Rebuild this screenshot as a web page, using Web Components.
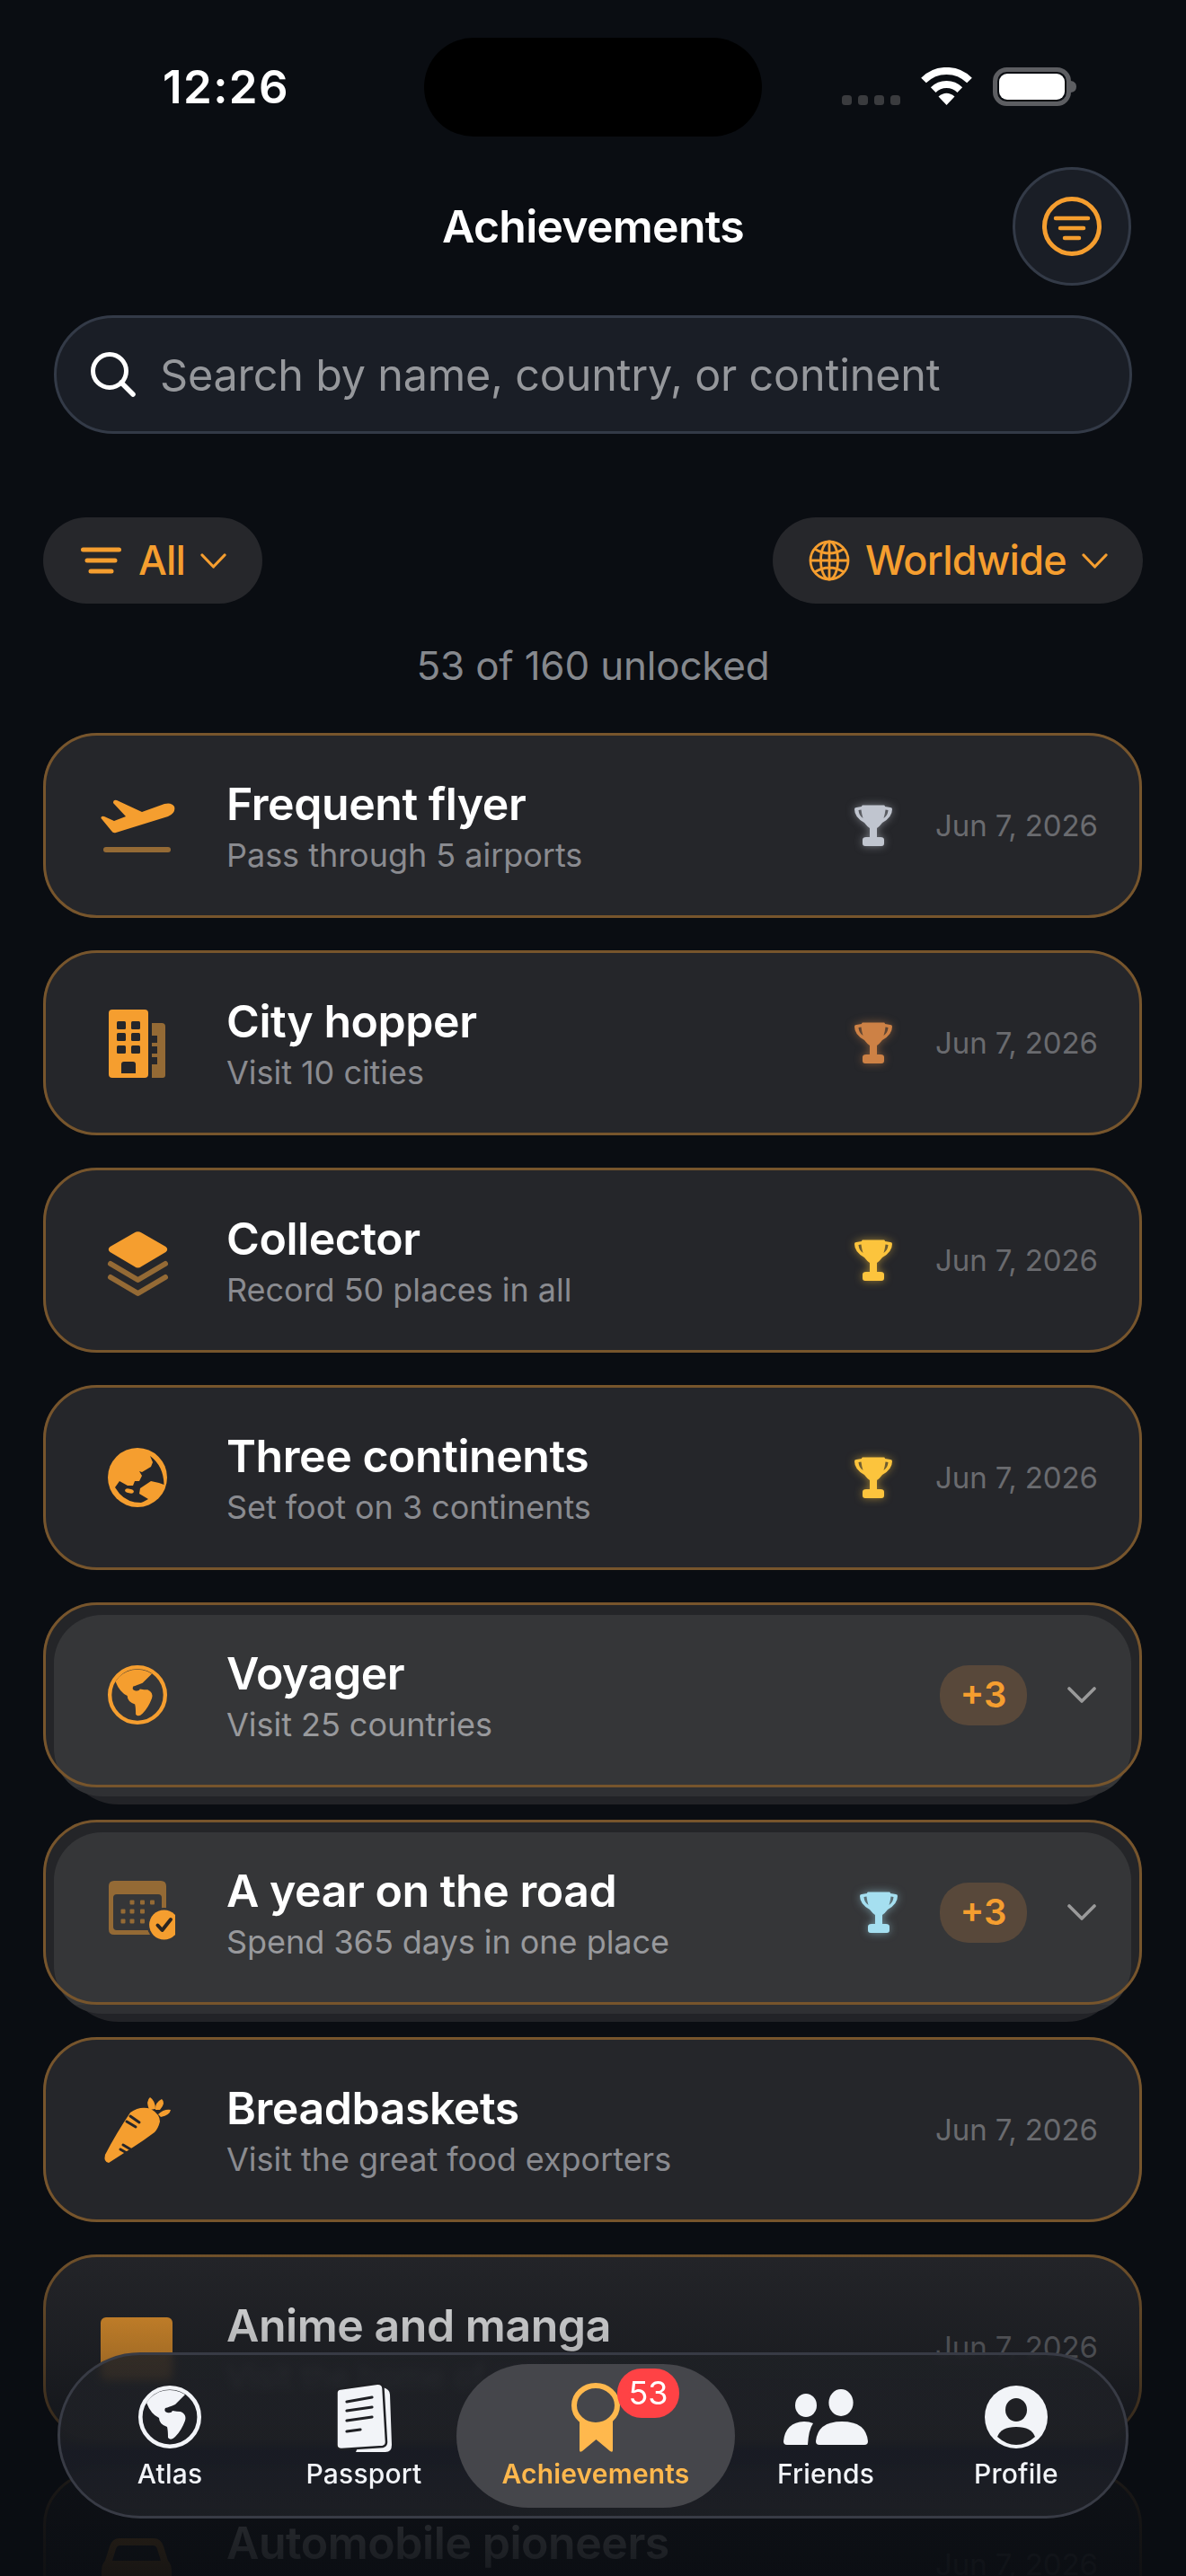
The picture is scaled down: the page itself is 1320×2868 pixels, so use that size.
<!DOCTYPE html>
<html lang="en">
<head>
<meta charset="utf-8">
<title>Achievements</title>
<style>
  html, body { margin: 0; padding: 0; background: #0a0d12; }
  body { width: 1320px; height: 2868px; overflow: hidden; font-family: Inter, "Noto Sans", sans-serif; color: #fff; }
</style>
</head>
<body>
<achievements-screen>
  <status-bar time="12:26"></status-bar>
  <page-header>Achievements</page-header>
  <search-field>Search by name, country, or continent</search-field>
  <filter-row>
    <filter-pill icon="lines">All</filter-pill>
    <filter-pill icon="globe">Worldwide</filter-pill>
  </filter-row>
  <unlock-count>53 of 160 unlocked</unlock-count>
  <achievement-list>
    <achievement-card icon="plane" trophy="silver" date="Jun 7, 2026">Frequent flyer<span slot="sub">Pass through 5 airports</span></achievement-card>
    <achievement-card icon="city" trophy="bronze" date="Jun 7, 2026">City hopper<span slot="sub">Visit 10 cities</span></achievement-card>
    <achievement-card icon="layers" trophy="gold" date="Jun 7, 2026">Collector<span slot="sub">Record 50 places in all</span></achievement-card>
    <achievement-card icon="asia" trophy="gold" date="Jun 7, 2026">Three continents<span slot="sub">Set foot on 3 continents</span></achievement-card>
    <achievement-card icon="americas" extra="+3" stacked>Voyager<span slot="sub">Visit 25 countries</span></achievement-card>
    <achievement-card icon="calendar" trophy="ice" extra="+3" stacked>A year on the road<span slot="sub">Spend 365 days in one place</span></achievement-card>
    <achievement-card icon="carrot" date="Jun 7, 2026">Breadbaskets<span slot="sub">Visit the great food exporters</span></achievement-card>
    <achievement-card icon="book" date="Jun 7, 2026">Anime and manga<span slot="sub">Visit the home of anime</span></achievement-card>
    <achievement-card icon="car" date="Jun 7, 2026">Automobile pioneers<span slot="sub">Visit the great car makers</span></achievement-card>
  </achievement-list>
  <bottom-nav>
    <nav-item icon="atlas">Atlas</nav-item>
    <nav-item icon="passport">Passport</nav-item>
    <nav-item icon="medal" active badge="53">Achievements</nav-item>
    <nav-item icon="friends">Friends</nav-item>
    <nav-item icon="profile">Profile</nav-item>
  </bottom-nav>
</achievements-screen>

<script>
const ORANGE = "#f59e2f";
const DIM = "#946a35";

const globeLand = "M9 19A31 31 0 0 1 52 10L41 21Q34 24 30 25Q28 29 32 30Q37 31 38 28Q43 29 47 29Q54 32 52 39Q48 50 41 57Q36 62 33 58Q33 50 32 46Q23 43 23 36Q14 32 9 19Z";
const atlasGlobe = (c) => `<svg width="70" height="70" viewBox="0 0 70 70"><circle cx="35" cy="35" r="32.7" fill="none" stroke="${c}" stroke-width="4.6"/><path fill="${c}" d="${globeLand}"/></svg>`;

const ICONS = {
  plane: `<svg width="84" height="84" viewBox="0 0 84 84"><path fill="${ORANGE}" d="M1.5 34Q1 31 5 32L16 37L29 32L15 17Q15 13 19 14L47 27L72 18Q80 16 83 21Q85 28 76 32L18 50Q15 51 13 48Z"/><rect x="4" y="66" width="75" height="6" rx="3" fill="${DIM}"/></svg>`,
  city: `<svg width="84" height="84" viewBox="0 0 84 84"><path fill="${DIM}" d="M58 20H69Q73 20 73 24V78Q73 81 70 81H58Z"/><g fill="#25262a"><rect x="58" y="34" width="6" height="8"/><rect x="58" y="46" width="6" height="8"/><rect x="58" y="58" width="6" height="8"/></g><rect x="10" y="5" width="44" height="76" rx="4" fill="${ORANGE}"/><g fill="#25262a"><rect x="19" y="18" width="10" height="9" rx="1.5"/><rect x="35" y="18" width="10" height="9" rx="1.5"/><rect x="19" y="31" width="10" height="9" rx="1.5"/><rect x="35" y="31" width="10" height="9" rx="1.5"/><rect x="19" y="45" width="10" height="9" rx="1.5"/><rect x="35" y="45" width="10" height="9" rx="1.5"/><path d="M24 66Q24 63 27 63H37Q40 63 40 66V76H24Z"/></g></svg>`,
  layers: `<svg width="84" height="84" viewBox="0 0 84 84"><path fill="none" stroke="${DIM}" stroke-width="6" stroke-linecap="round" stroke-linejoin="round" d="M12 46L42.5 64L73 46M12 61L42.5 79L73 61"/><path fill="${ORANGE}" d="M38.5 11.5Q42.5 9 46.5 11.5L73.5 27Q77 30 73.5 33L46.5 49Q42.5 52 38.5 49L11.500 33Q8 30 11.500 27Z"/></svg>`,
  asia: `<svg width="84" height="84" viewBox="0 0 84 84"><g transform="translate(9 9)"><circle cx="33" cy="33" r="33" fill="${ORANGE}"/><path fill="#25262a" d="M47 9Q62 20 62.500 41L57 39L48 37L42 41L36 45L35 51L45 57Q40 60 37 61Q22 61 13 51L8 44L13 37L22 42L28 42L30 37L35 37L38 31L35 26L38 27L48 21L50 16Z"/><ellipse cx="24" cy="48" rx="5" ry="2.400" fill="${ORANGE}" transform="rotate(12 24 48)"/></g></svg>`,
  americas: `<svg width="84" height="84" viewBox="0 0 84 84"><g transform="translate(9 9) scale(.943)">${atlasGlobe(ORANGE).replace(/<\/?svg[^>]*>/g, "")}</g></svg>`,
  calendar: `<svg width="84" height="84" viewBox="0 0 84 84"><path fill="${DIM}" fill-rule="evenodd" d="M16 7H68Q74 7 74 13V61Q74 67 68 67H16Q10 67 10 61V13Q10 7 16 7ZM19 22Q15 22 15 26V58Q15 62 19 62H65Q69 62 69 58V26Q69 22 65 22Z"/><g fill="${DIM}"><rect x="33.500" y="28.500" width="5" height="5" rx="1"/><rect x="45" y="28.500" width="5" height="5" rx="1"/><rect x="56" y="28.500" width="5" height="5" rx="1"/><rect x="23.500" y="38.500" width="5" height="5" rx="1"/><rect x="33.500" y="38.500" width="5" height="5" rx="1"/><rect x="45" y="38.500" width="5" height="5" rx="1"/><rect x="23.500" y="49.500" width="5" height="5" rx="1"/><rect x="33.500" y="49.500" width="5" height="5" rx="1"/><rect x="45" y="49.500" width="5" height="5" rx="1"/></g><circle cx="71.600" cy="56" r="19" fill="#353638"/><circle cx="71.600" cy="56" r="16.500" fill="${ORANGE}"/><path fill="none" stroke="#2b2520" stroke-width="4" stroke-linecap="round" stroke-linejoin="round" d="M64.500 56.500L69.500 62L79 50"/></svg>`,
  carrot: `<svg width="84" height="84" viewBox="0 0 84 84"><g transform="translate(5 5)"><path fill="${ORANGE}" d="M1 65Q14 40 29 18Q40 10 52 14Q62 20 62 28Q60 36 56 40Q44 49 33 56L5 74Q-1 73 1 65Z"/><path fill="${ORANGE}" d="M50 15Q46 5 51 1Q57 5 57 14ZM57 15Q56 7 64 3Q69 7 62 15ZM60 20Q66 14 74 15Q73 21 63 23Z"/><path fill="none" stroke="#25262a" stroke-width="3" stroke-linecap="round" d="M29 22L39 29M25 28L35 34M21 54L31 60M18 59L25 63"/></g></svg>`,
  book: `<svg width="84" height="84" viewBox="0 0 84 84"><rect x="1" y="9" width="80" height="70" rx="6" fill="${ORANGE}"/></svg>`,
  car: `<svg width="84" height="84" viewBox="0 0 84 84"><path fill="${ORANGE}" d="M22 13H60Q68 13 71 22L76 38Q80 42 80 50V76H68V70H14V76H2V50Q2 42 6 38L11 22Q14 13 22 13ZM23 21Q19 21 18 25L14 38H68L64 25Q63 21 59 21Z" fill-rule="evenodd"/></svg>`
};

const TROPHY_PATH = "M9 .5H33Q34 .5 34 2L40 3Q42 3 42 5Q42 14 31 20Q28 24 25 26V36H29Q33 36 33 39V43Q33 46 30 46H12Q9 46 9 43V39Q9 36 13 36H17V26Q14 24 11 20Q0 14 0 5Q0 3 2 3L8 2Q8 .5 9 .5ZM4.500 6Q5 12 9.500 15Q8 10 7.500 5.500ZM37.500 6Q37 12 32.500 15Q34 10 34.500 5.500Z";
const TROPHY_COLORS = { silver: "#c0c5cf", bronze: "#cd8145", gold: "#fcc43d", ice: "#a5dff0" };

const NAV_ICONS = {
  atlas: atlasGlobe("#f2f4f8"),
  passport: `<svg width="62" height="77" viewBox="0 0 62 77"><path fill="#f2f4f8" d="M52 5Q60 7 60 13L62 69Q62 77 55 77L22 77Z"/><path fill="#f2f4f8" stroke="#1f2024" stroke-width="2.500" d="M5 6.500L46 .8Q52 .5 52.500 6L56 66Q56 70 52 71L6 74Q.5 74 .5 69V11Q.5 7 5 6.500Z"/><path fill="none" stroke="#1f2024" stroke-width="3.200" stroke-linecap="round" d="M12 21L40 16M12 31L40 27M12 42L40 38M12 54L27 52"/></svg>`,
  medal: `<svg width="54" height="77" viewBox="0 0 54 77"><path fill="#ffb84d" d="M9 42H46V75Q46 78 43 76L27.500 63L12 76Q9 78 9 75Z"/><ellipse cx="27" cy="25" rx="24" ry="22" fill="#45464b" stroke="#ffb84d" stroke-width="6"/></svg>`,
  friends: `<svg width="94" height="62" viewBox="0 0 94 62"><g fill="#f2f4f8"><ellipse cx="25" cy="18" rx="12" ry="13"/><ellipse cx="64" cy="15" rx="13.600" ry="15"/><path d="M36 58Q38 36 65 36Q92 36 94 58Q94 62 90 62H40Q36 62 36 58Z"/><path d="M0 58Q2 37 23 36Q29 36 33 38Q28 45 27 62H4Q0 62 0 58Z"/></g></svg>`,
  profile: `<svg width="70" height="70" viewBox="0 0 70 70"><circle cx="35" cy="35" r="35" fill="#f2f4f8"/><ellipse cx="35" cy="27" rx="12" ry="13" fill="#1f2024"/><path fill="#1f2024" d="M14 57Q18 46 35 46Q52 46 56 57Q46 66 35 66Q24 66 14 57Z"/></svg>`
};

// shared shadow root set up
class Base extends HTMLElement {
  constructor() {
    super();
    this.shadowDOM = this.attachShadow({ mode: "open" });
  }
  connectedCallback() {
    this.render();
  }
}

class AchievementsScreen extends Base {
  render() {
    this.shadowDOM.innerHTML = `
      <style>
        :host { display: block; position: relative; width: 1320px; height: 2868px; overflow: hidden; background: #0a0d12; }
      </style>
      <slot></slot>
    `;
  }
}

class StatusBar extends Base {
  render() {
    this.shadowDOM.innerHTML = `
      <style>
        :host { display: flex; height: 186px; padding-left: 181px; box-sizing: border-box; align-items: flex-start; }
        .time { width: 139px; margin-top: 69px; margin-right: 152px; font: 600 51px/56px Inter, sans-serif; letter-spacing: 1.4px; color: #fff; white-space: nowrap; }
        .island { width: 376px; height: 110px; margin-top: 42px; margin-right: 89px; border-radius: 55px; background: #000; }
        .right { display: flex; align-items: flex-end; margin-top: 75px; height: 43px; }
        .dots { display: flex; gap: 7px; margin-right: 23px; margin-bottom: 1px; }
        .dots i { width: 11px; height: 11px; border-radius: 3.5px; background: #3a3b3e; }
        svg { display: block; }
        .wifi { margin-right: 23px; margin-bottom: 1px; }
      </style>
      <div class="time">${this.getAttribute("time")}</div>
      <div class="island"></div>
      <div class="right">
        <div class="dots"><i></i><i></i><i></i><i></i></div>
        <svg class="wifi" width="57" height="42" viewBox="0 0 57 42"><g fill="none" stroke="#fff" stroke-width="8"><path d="M3 14.500A36 36 0 0 1 54 14.500"/><path d="M13.700 25.200A21 21 0 0 1 43.300 25.200"/></g><path fill="#fff" d="M28.500 42L19.500 32.500Q28.500 25 37.500 32.500Z"/></svg>
        <svg width="93" height="43" viewBox="0 0 93 43"><rect x="2.500" y="2.500" width="82" height="38" rx="13" fill="none" stroke="#5d5e62" stroke-width="5"/><rect x="7" y="7" width="73" height="29" rx="9" fill="#fff"/><path d="M87 15Q93 16 93 21.500Q93 27 87 28Z" fill="#5d5e62"/></svg>
      </div>
    `;
  }
}

class PageHeader extends Base {
  render() {
    this.shadowDOM.innerHTML = `
      <style>
        :host { display: grid; grid-template-columns: 1fr auto 1fr; align-items: center; height: 132px; padding-right: 61px; padding-left: 61px; box-sizing: border-box; }
        .title { grid-column: 2; font: 600 50px/60px Inter, sans-serif; letter-spacing: -.75px; color: #fff; }
        button { grid-column: 3; justify-self: end; width: 132px; height: 132px; padding: 0; border-radius: 50%; border: 3px solid #333a47; background: #1a1e26; display: flex; align-items: center; justify-content: center; }
      </style>
      <div class="title"><slot></slot></div>
      <button>
        <svg width="66" height="66" viewBox="0 0 66 66"><circle cx="33" cy="33" r="30.500" fill="none" stroke="${ORANGE}" stroke-width="5"/><path fill="none" stroke="${ORANGE}" stroke-width="4.500" stroke-linecap="round" d="M15 24H51M20 35H46M25 46H41"/></svg>
      </button>
    `;
  }
}

class SearchField extends Base {
  render() {
    this.shadowDOM.innerHTML = `
      <style>
        :host { display: flex; align-items: center; gap: 27px; height: 132px; margin: 33px 60px 0 60px; padding-left: 38px; box-sizing: border-box; border-radius: 66px; border: 3px solid #333a47; background: #1a1e26; }
        .text { font: 400 48.5px/60px Inter, sans-serif; letter-spacing: -.2px; padding-top: 2px; color: #96989c; white-space: nowrap; }
        svg { display: block; }
      </style>
      <svg width="50" height="50" viewBox="0 0 50 50"><circle cx="21" cy="21" r="18.500" fill="none" stroke="#fff" stroke-width="5"/><path d="M34 34L47 47" stroke="#fff" stroke-width="5.500" stroke-linecap="round"/></svg>
      <div class="text"><slot></slot></div>
    `;
  }
}

class FilterRow extends Base {
  render() {
    this.shadowDOM.innerHTML = `
      <style>
        :host { display: flex; justify-content: space-between; margin: 93px 48px 0 48px; }
      </style>
      <slot></slot>
    `;
  }
}

class FilterPill extends Base {
  render() {
    const globe = this.getAttribute("icon") === "globe";
    const icon = globe
      ? `<svg width="46" height="46" viewBox="0 0 46 46"><g fill="none" stroke="${ORANGE}" stroke-width="2.800"><circle cx="23" cy="23" r="21"/><ellipse cx="23" cy="23" rx="9.500" ry="21"/><path d="M2 23H44M23 2V44M6.500 10Q23 20 39.500 10M6.500 36Q23 26 39.500 36"/></g></svg>`
      : `<svg width="45" height="30" viewBox="0 0 45 30"><path fill="none" stroke="${ORANGE}" stroke-width="5" stroke-linecap="round" d="M2.500 3H42.500M7 15H38M11 27H34"/></svg>`;
    this.shadowDOM.innerHTML = `
      <style>
        :host { display: flex; align-items: center; height: 96px; border-radius: 48px; background: #26272b; box-sizing: border-box; padding: 0 ${globe ? 39 : 40}px 0 ${globe ? 40 : 42}px; }
        .text { font: 450 45px/54px Inter, sans-serif; letter-spacing: ${globe ? -.7 : -.9}px; color: ${ORANGE}; margin: 0 ${globe ? 17 : 17}px 0 ${globe ? 17 : 19}px; white-space: nowrap; }
        svg { display: block; }
      </style>
      ${icon}
      <div class="text"><slot></slot></div>
      <svg width="29" height="17" viewBox="0 0 29 17"><path fill="none" stroke="${ORANGE}" stroke-width="3.200" stroke-linecap="round" stroke-linejoin="round" d="M2 2L14.500 15L27 2"/></svg>
    `;
  }
}

class UnlockCount extends Base {
  render() {
    this.shadowDOM.innerHTML = `
      <style>
        :host { display: block; margin-top: 42px; text-align: center; font: 400 44px/54px Inter, sans-serif; letter-spacing: -.2px; color: #85888d; }
      </style>
      <slot></slot>
    `;
  }
}

class AchievementList extends Base {
  render() {
    this.shadowDOM.innerHTML = `
      <style>
        :host { display: flex; flex-direction: column; gap: 36px; margin: 48px 49px 0 48px; }
      </style>
      <slot></slot>
    `;
  }
}

class AchievementCard extends Base {
  render() {
    const icon = this.getAttribute("icon");
    const trophy = this.getAttribute("trophy");
    const date = this.getAttribute("date");
    const extra = this.getAttribute("extra");
    const stacked = this.hasAttribute("stacked");
    const color = TROPHY_COLORS[trophy];
    this.shadowDOM.innerHTML = `
      <style>
        :host { display: block; position: relative; height: 206px; flex: none; }
        .back, .base, .mid, .frame { position: absolute; box-sizing: border-box; }
        .base, .frame { inset: 0; border-radius: 60px; }
        .base { background: ${stacked ? "#242528" : "#25262a"}; }
        .frame { border: 3px solid #77552c; }
        .back { left: 24px; right: 24px; top: 30px; bottom: -19px; border-radius: 60px; background: #222327; }
        .mid { left: 12px; right: 12px; top: 14px; bottom: -10px; border-radius: 54px; background: linear-gradient(#353638 0 95%, #2f3033 95%); }
        .row { position: relative; display: flex; align-items: center; height: 206px; padding: 0 49px 0 63px; box-sizing: border-box; }
        .icon { width: 84px; height: 84px; flex: none; margin-right: 57px; }
        svg { display: block; }
        .text { padding-top: 6px; min-width: 0; }
        .name { font: 600 50px/60px Inter, sans-serif; letter-spacing: -.45px; color: #fff; white-space: nowrap; }
        .sub { font: 400 36px/54px Inter, sans-serif; letter-spacing: -.03px; color: ${stacked ? "#98999c" : "#8a8b90"}; white-space: nowrap; }
        .right { margin-left: auto; display: flex; align-items: center; }
        .trophy { filter: drop-shadow(0 0 5px ${color}88); }
        .date { font: 400 33px/40px Inter, sans-serif; letter-spacing: -.09px; color: #6a6b6f; margin-left: 48px; white-space: nowrap; }
        .extra { display: flex; align-items: center; justify-content: center; width: 97px; height: 67px; border-radius: 32px; background: #58483a; color: ${ORANGE}; font: 600 40px/48px Inter, sans-serif; margin-left: 47px; }
        .chev { margin-left: 45px; margin-right: 2px; }
      </style>
      ${stacked ? `<div class="back"></div>` : ""}
      <div class="base"></div>
      ${stacked ? `<div class="mid"></div>` : ""}
      <div class="frame"></div>
      <div class="row">
        <div class="icon">${ICONS[icon]}</div>
        <div class="text">
          <div class="name"><slot></slot></div>
          <div class="sub"><slot name="sub"></slot></div>
        </div>
        <div class="right">
          ${trophy ? `<svg class="trophy" width="42" height="46" viewBox="0 0 42 46"><path fill="${color}" fill-rule="evenodd" d="${TROPHY_PATH}"/></svg>` : ""}
          ${date ? `<div class="date">${date}</div>` : ""}
          ${extra ? `<div class="extra">${extra}</div><svg class="chev" width="32" height="18" viewBox="0 0 32 18"><path fill="none" stroke="#9a9a9a" stroke-width="3.600" stroke-linecap="round" stroke-linejoin="round" d="M2 2L16 16L30 2"/></svg>` : ""}
        </div>
      </div>
    `;
  }
}

class BottomNav extends Base {
  render() {
    this.shadowDOM.innerHTML = `
      <style>
        :host { position: absolute; left: 0; top: 2480px; width: 1320px; height: 388px; display: block; }
        .fade { position: absolute; inset: 0; background: linear-gradient(rgba(10,13,18,0) 0%, rgba(10,13,18,.33) 36%, rgba(10,13,18,.86) 75%, rgba(10,13,18,.94) 100%); }
        .bar { position: absolute; left: 64px; top: 139px; width: 1192px; height: 185px; box-sizing: border-box; padding: 29px 0 0 16px; display: grid; grid-template-columns: 212px 220px 296px 216px 208px; align-items: start; border-radius: 92px; border: 3px solid #383b45; background: linear-gradient(rgba(31,33,38,.86) 0 52%, rgba(27,30,39,.86) 60%, rgba(31,33,38,.86) 100%); backdrop-filter: blur(5px); }
      </style>
      <div class="fade"></div>
      <div class="bar"><slot></slot></div>
    `;
  }
}

class NavItem extends Base {
  render() {
    const active = this.hasAttribute("active");
    const badge = this.getAttribute("badge");
    this.shadowDOM.innerHTML = `
      <style>
        :host { display: flex; flex-direction: column; align-items: center; position: relative; }
        .pill { position: absolute; left: -7px; right: -7px; top: -19px; height: 160px; border-radius: 80px; background: #45464b; }
        .icon { position: relative; height: 80px; display: flex; align-items: center; justify-content: center; }
        svg { display: block; }
        .label { position: relative; margin-top: 5px; font: ${active ? 600 : 500} 30px/36px Inter, sans-serif; letter-spacing: .17px; color: ${active ? "#ffb84d" : "#f2f4f8"}; white-space: nowrap; }
        .badge { position: absolute; left: 172px; top: -14px; width: 69px; height: 55px; border-radius: 27px; background: #ff4245; color: #fff; font: 400 36px/55px Inter, sans-serif; text-align: center; }
      </style>
      ${active ? `<div class="pill"></div>` : ""}
      <div class="icon">${NAV_ICONS[this.getAttribute("icon")]}</div>
      <div class="label"><slot></slot></div>
      ${badge ? `<div class="badge">${badge}</div>` : ""}
    `;
  }
}

customElements.define("achievements-screen", AchievementsScreen);
customElements.define("status-bar", StatusBar);
customElements.define("page-header", PageHeader);
customElements.define("search-field", SearchField);
customElements.define("filter-row", FilterRow);
customElements.define("filter-pill", FilterPill);
customElements.define("unlock-count", UnlockCount);
customElements.define("achievement-list", AchievementList);
customElements.define("achievement-card", AchievementCard);
customElements.define("bottom-nav", BottomNav);
customElements.define("nav-item", NavItem);
</script>
</body>
</html>
